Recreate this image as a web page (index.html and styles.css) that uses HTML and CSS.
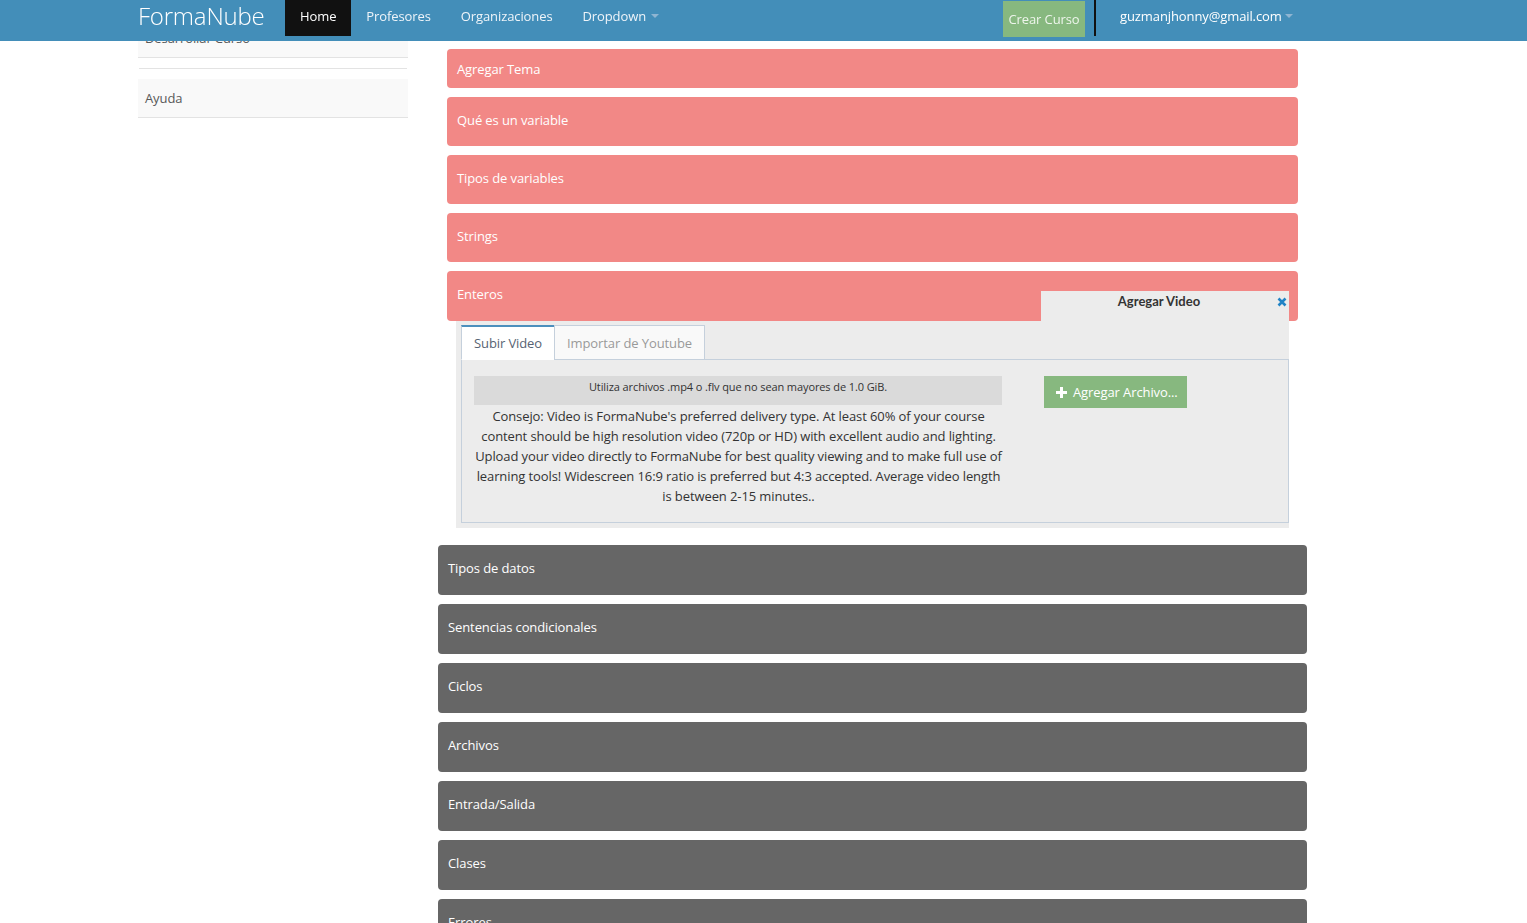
FILE: index.html
```html
<!DOCTYPE html>
<html lang="es">
<head>
<meta charset="utf-8">
<title>FormaNube</title>
<link rel="stylesheet" href="styles.css">
</head>
<body>
<nav class="navbar">
  <a class="brand">FormaNube</a>
  <ul class="nav">
    <li class="active"><a>Home</a></li>
    <li><a>Profesores</a></li>
    <li><a>Organizaciones</a></li>
    <li><a>Dropdown <span class="caret"></span></a></li>
  </ul>
  <div class="nav-right">
    <a class="btn-crear">Crear Curso</a>
    <span class="vsep"></span>
    <a class="user">guzmanjhonny@gmail.com <span class="caret"></span></a>
  </div>
</nav>

<div class="page">
  <aside class="sidebar">
    <div class="side-item">Desarrollar Curso</div>
    <div class="side-divider"></div>
    <div class="side-item">Ayuda</div>
  </aside>

  <main class="main">
    <div class="topics">
      <div class="topic topic-add">Agregar Tema</div>
      <div class="topic">Qué es un variable</div>
      <div class="topic">Tipos de variables</div>
      <div class="topic">Strings</div>
      <div class="topic topic-open">Enteros</div>
    </div>

    <section class="upload">
      <div class="upload-head">
        <span>Agregar Video</span>
        <svg class="close" width="10" height="10" viewBox="0 0 10 10"><path d="M1.5 1.5 L8.5 8.5 M8.5 1.5 L1.5 8.5" stroke="#2283c5" stroke-width="2.6" stroke-linecap="butt"/></svg>
      </div>
      <ul class="tabs">
        <li class="tab tab-active">Subir Video</li>
        <li class="tab">Importar de Youtube</li>
      </ul>
      <div class="tab-content">
        <div class="tab-left">
          <div class="info">Utiliza archivos .mp4 o .flv que no sean mayores de 1.0 GiB.</div>
          <p class="tip">Consejo: Video is FormaNube's preferred delivery type. At least 60% of your course content should be high resolution video (720p or HD) with excellent audio and lighting. Upload your video directly to FormaNube for best quality viewing and to make full use of learning tools! Widescreen 16:9 ratio is preferred but 4:3 accepted. Average video length is between 2-15 minutes..</p>
        </div>
        <div class="tab-right">
          <a class="btn-add"><svg width="11" height="11" viewBox="0 0 11 11"><path d="M4 0h3v4h4v3H7v4H4V7H0V4h4z" fill="#fff"/></svg> Agregar Archivo...</a>
        </div>
      </div>
    </section>

    <div class="sections">
      <div class="section">Tipos de datos</div>
      <div class="section">Sentencias condicionales</div>
      <div class="section">Ciclos</div>
      <div class="section">Archivos</div>
      <div class="section">Entrada/Salida</div>
      <div class="section">Clases</div>
      <div class="section">Errores</div>
    </div>
  </main>
</div>
</body>
</html>
```

FILE: styles.css
```css
* { box-sizing: border-box; }
html, body { margin: 0; padding: 0; }
body {
  font-family: "Open Sans", "Liberation Sans", sans-serif;
  font-size: 13px;
  line-height: 18px;
  letter-spacing: -0.1px;
  color: #393939;
  background: #fff;
  overflow: hidden;
}
a { text-decoration: none; color: inherit; }

/* navbar */
.navbar {
  position: fixed;
  top: 0; left: 0; right: 0;
  height: 41px;
  background: #438eb9;
  display: flex;
  align-items: flex-start;
  padding-left: 138px;
  z-index: 10;
}
.brand {
  width: 147px;
  flex: none;
  color: #fff;
  font-size: 24px;
  line-height: 32px;
  font-weight: 300;
  letter-spacing: -0.2px;
}
.nav {
  list-style: none;
  margin: 0; padding: 0;
  display: flex;
}
.nav li a {
  display: block;
  padding: 6px 15px 10px;
  line-height: 20px;
  color: #eef4f9;
}
.nav li.active a {
  background: #111;
  color: #fff;
}
.caret {
  display: inline-block;
  width: 0; height: 0;
  border-left: 4px solid transparent;
  border-right: 4px solid transparent;
  border-top: 4px solid #8fb5d2;
  vertical-align: middle;
  margin-left: 2px;
  margin-top: -3px;
}
.nav-right {
  display: flex;
  align-items: flex-start;
  margin-left: auto;
  margin-right: 234px;
}
.btn-crear {
  display: block;
  margin-top: 1px;
  width: 82px;
  height: 36px;
  background: #87b87f;
  color: #eef5ec;
  text-align: center;
  line-height: 36px;
}
.vsep {
  display: block;
  width: 2px;
  height: 36px;
  background: #111;
  margin-left: 9px;
}
.user {
  display: block;
  color: #fff;
  margin-left: 24px;
  padding-top: 6px;
  line-height: 20px;
}
.user .caret { margin-left: 0; }

/* page layout */
.page {
  display: flex;
  padding-left: 138px;
  gap: 30px;
}
.sidebar {
  width: 270px;
  flex: none;
  padding-top: 19px;
}
.side-item {
  background: #f9f9f9;
  border-bottom: 1px solid #e3e3e3;
  height: 39px;
  padding: 10px 7px;
  color: #585858;
}
.side-divider {
  margin: 10px 1px;
  border-top: 1px solid #e3e3e3;
}

.main {
  width: 869px;
  flex: none;
  padding-top: 49px;
}
.topics {
  margin: 0 9px;
  display: flex;
  flex-direction: column;
  gap: 9px;
}
.topic {
  background: #f28886;
  color: #fff;
  border-radius: 4px;
  height: 49px;
  padding: 14px 10px;
}
.topic-add { height: 39px; padding: 11px 10px 10px; }
.topic-open { height: 50px; }

/* upload widget */
.upload {
  position: relative;
  margin: 0 18px 17px;
  background: #ececec;
  padding: 4px 0 5px 5px;
}
.upload-head {
  position: absolute;
  right: 0;
  top: -30px;
  width: 248px;
  height: 30px;
  background: #ececec;
  text-align: center;
  padding: 1px 12px 0 0;
  color: #333;
  font-weight: 700;
  font-family: "Lato", "Open Sans", sans-serif;
  font-size: 13px;
  letter-spacing: 0;
  line-height: 18px;
}
.upload-head .close {
  position: absolute;
  right: 2px;
  top: 6px;
}
.tabs {
  list-style: none;
  margin: 0; padding: 0;
  display: flex;
  height: 34px;
  position: relative;
  z-index: 1;
}
.tab {
  height: 35px;
  padding: 8px 12px;
  border: 1px solid #c5d0dc;
  background: #f9f9f9;
  color: #999;
  font-size: 13px;
  margin-right: -1px;
}
.tab-active {
  background: #fff;
  color: #576373;
  border-top: 2px solid #4c8fbd;
  border-bottom-color: #fff;
  padding-top: 7px;
  height: 35px;
}
.tab-content {
  border: 1px solid #c5d0dc;
  background: #ececec;
  display: flex;
  padding: 16px 12px 16px 12px;
  height: 164px;
}
.tab-left { width: 529px; flex: none; }
.info {
  background: #dadada;
  width: 528px;
  height: 29px;
  text-align: center;
  font-size: 11px;
  line-height: 21px;
  color: #333;
}
.tip {
  margin: 1px 0 0;
  text-align: center;
  line-height: 20px;
  color: #333;
}
.tab-right { margin-left: 41px; }
.btn-add {
  display: flex;
  align-items: center;
  gap: 6px;
  width: 143px;
  height: 32px;
  background: #87b87f;
  color: #fff;
  padding-left: 12px;
}

/* lower sections */
.sections {
  display: flex;
  flex-direction: column;
  gap: 9px;
}
.section {
  background: #666;
  color: #fff;
  border-radius: 4px;
  height: 50px;
  padding: 14px 10px;
  flex: none;
}
```
